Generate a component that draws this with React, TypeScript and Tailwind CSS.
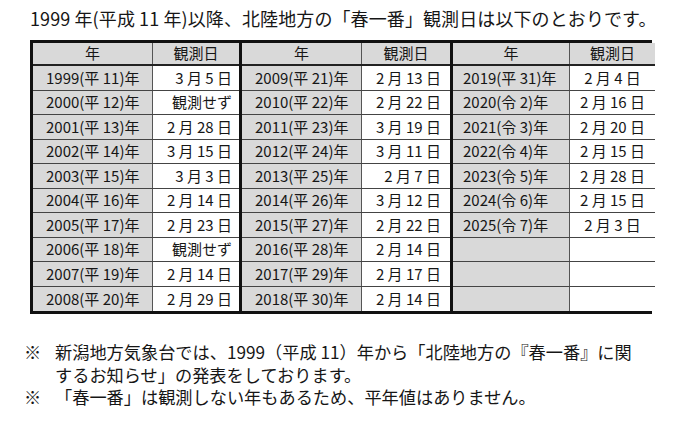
import React from "react";

type Row = [string, string];

const groups: { rows: Row[]; yw: string; dw: string; ypad: string; dalign: string }[] = [
  {
    rows: [
      ["1999(平 11)年", "3 月 5 日"],
      ["2000(平 12)年", "観測せず"],
      ["2001(平 13)年", "2 月 28 日"],
      ["2002(平 14)年", "3 月 15 日"],
      ["2003(平 15)年", "3 月 3 日"],
      ["2004(平 16)年", "2 月 14 日"],
      ["2005(平 17)年", "2 月 23 日"],
      ["2006(平 18)年", "観測せず"],
      ["2007(平 19)年", "2 月 14 日"],
      ["2008(平 20)年", "2 月 29 日"],
    ],
    yw: "w-[120px]",
    dw: "w-[86px]",
    ypad: "pl-[13px]",
    dalign: "justify-end pr-[7px]",
  },
  {
    rows: [
      ["2009(平 21)年", "2 月 13 日"],
      ["2010(平 22)年", "2 月 22 日"],
      ["2011(平 23)年", "3 月 19 日"],
      ["2012(平 24)年", "3 月 11 日"],
      ["2013(平 25)年", "2 月 7 日"],
      ["2014(平 26)年", "3 月 12 日"],
      ["2015(平 27)年", "2 月 22 日"],
      ["2016(平 28)年", "2 月 14 日"],
      ["2017(平 29)年", "2 月 17 日"],
      ["2018(平 30)年", "2 月 14 日"],
    ],
    yw: "w-[120px]",
    dw: "w-[88px]",
    ypad: "pl-[13px]",
    dalign: "justify-end pr-[9px]",
  },
  {
    rows: [
      ["2019(平 31)年", "2 月 4 日"],
      ["2020(令 2)年", "2 月 16 日"],
      ["2021(令 3)年", "2 月 20 日"],
      ["2022(令 4)年", "2 月 15 日"],
      ["2023(令 5)年", "2 月 28 日"],
      ["2024(令 6)年", "2 月 15 日"],
      ["2025(令 7)年", "2 月 3 日"],
      ["", ""],
      ["", ""],
      ["", ""],
    ],
    yw: "w-[117px]",
    dw: "w-[85px]",
    ypad: "pl-[10px]",
    dalign: "justify-center",
  },
];

export default function App() {
  return (
    <div
      className="w-[680px] h-[423px] bg-white text-[#161616] overflow-hidden"
      style={{ fontFamily: '"Noto Sans CJK JP", "Noto Sans", sans-serif' }}
    >
      {/* Title */}
      <div className="pt-[6px] pl-[30px] text-[18px] leading-[24px] whitespace-nowrap tracking-[0.1px]">
        1999 年(平成 11 年)以降、北陸地方の「春一番」観測日は以下のとおりです。
      </div>

      {/* Table */}
      <div className="mt-[10px] ml-[30px] w-[622px] border-[3px] border-[#111] flex text-[15px]">
        {groups.map((g, gi) => (
          <div
            key={gi}
            className={`flex flex-col ${gi < 2 ? "border-r-[3px] border-[#111]" : ""}`}
          >
            <div className="flex h-[23px] border-b-2 border-[#222] bg-[#d9d9d9]">
              <div className={`${g.yw} border-r border-[#555] flex items-center justify-center`}>年</div>
              <div className={`${g.dw} flex-1 flex items-center justify-center`}>観測日</div>
            </div>
            {g.rows.map((r, ri) => (
              <div
                key={ri}
                className={`flex h-[24.5px] ${ri < 9 ? "border-b border-[#444]" : ""}`}
              >
                <div className={`${g.yw} ${g.ypad} border-r border-[#555] bg-[#d9d9d9] flex items-center whitespace-nowrap`}>
                  {r[0]}
                </div>
                <div className={`${g.dw} flex-1 bg-white flex items-center whitespace-nowrap ${g.dalign}`}>
                  {r[1]}
                </div>
              </div>
            ))}
          </div>
        ))}
      </div>

      {/* Notes */}
      <div className="mt-[27px] pl-[24px] text-[17.2px] leading-[22.5px] whitespace-nowrap">
        <div className="flex">
          <span className="w-[31px] shrink-0">※</span>
          <div className="flex flex-col">
            <span>新潟地方気象台では、1999（平成 11）年から「北陸地方の『春一番』に関</span>
            <span>するお知らせ」の発表をしております。</span>
          </div>
        </div>
        <div className="flex">
          <span className="w-[31px] shrink-0">※</span>
          <span>「春一番」は観測しない年もあるため、平年値はありません。</span>
        </div>
      </div>
    </div>
  );
}
